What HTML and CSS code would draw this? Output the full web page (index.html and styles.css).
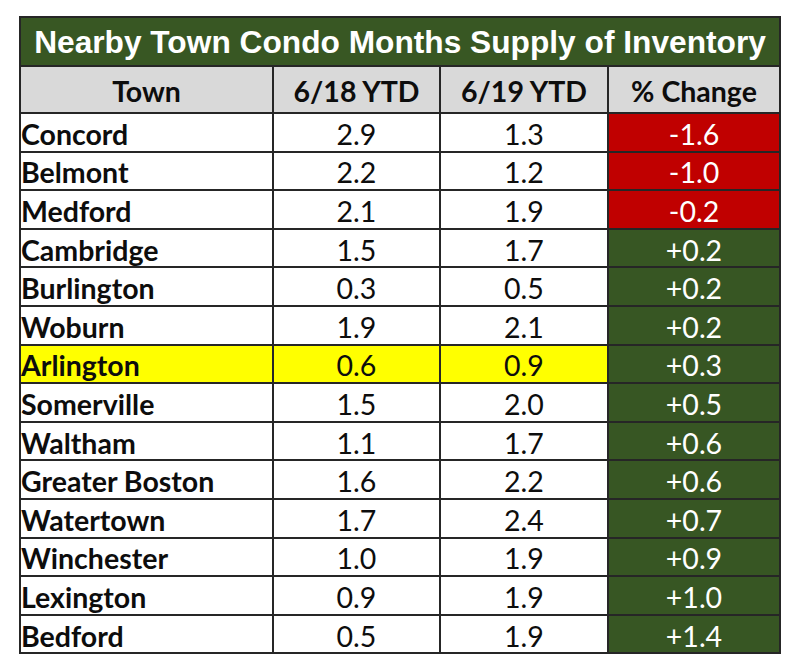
FILE: index.html
```html
<!DOCTYPE html>
<html>
<head>
<meta charset="utf-8">
<link rel="stylesheet" href="styles.css">
</head>
<body>
<table class="supply">
  <colgroup>
    <col class="c-town"><col class="c-num"><col class="c-num2"><col class="c-chg">
  </colgroup>
  <thead>
    <tr class="title-row"><th colspan="4">Nearby Town Condo Months Supply of Inventory</th></tr>
    <tr class="head-row"><th>Town</th><th>6/18 YTD</th><th>6/19 YTD</th><th>% Change</th></tr>
  </thead>
  <tbody>
    <tr><td class="town">Concord</td><td>2.9</td><td>1.3</td><td class="neg">-1.6</td></tr>
    <tr><td class="town">Belmont</td><td>2.2</td><td>1.2</td><td class="neg">-1.0</td></tr>
    <tr><td class="town">Medford</td><td>2.1</td><td>1.9</td><td class="neg">-0.2</td></tr>
    <tr><td class="town">Cambridge</td><td>1.5</td><td>1.7</td><td class="pos">+0.2</td></tr>
    <tr><td class="town">Burlington</td><td>0.3</td><td>0.5</td><td class="pos">+0.2</td></tr>
    <tr><td class="town">Woburn</td><td>1.9</td><td>2.1</td><td class="pos">+0.2</td></tr>
    <tr class="hl"><td class="town">Arlington</td><td>0.6</td><td>0.9</td><td class="pos">+0.3</td></tr>
    <tr><td class="town">Somerville</td><td>1.5</td><td>2.0</td><td class="pos">+0.5</td></tr>
    <tr><td class="town">Waltham</td><td>1.1</td><td>1.7</td><td class="pos">+0.6</td></tr>
    <tr><td class="town">Greater Boston</td><td>1.6</td><td>2.2</td><td class="pos">+0.6</td></tr>
    <tr><td class="town">Watertown</td><td>1.7</td><td>2.4</td><td class="pos">+0.7</td></tr>
    <tr><td class="town">Winchester</td><td>1.0</td><td>1.9</td><td class="pos">+0.9</td></tr>
    <tr><td class="town">Lexington</td><td>0.9</td><td>1.9</td><td class="pos">+1.0</td></tr>
    <tr><td class="town">Bedford</td><td>0.5</td><td>1.9</td><td class="pos">+1.4</td></tr>
  </tbody>
</table>
</body>
</html>
```

FILE: styles.css
```css
html, body {
  margin: 0;
  padding: 0;
  background: #ffffff;
}

body {
  padding: 16px 0 0 19px;
}

.supply {
  border-collapse: collapse;
  table-layout: fixed;
  width: 760px;
  font-family: Lato, "Open Sans", sans-serif;
  font-size: 28.5px;
  color: #0d0d0d;
  border: 2px solid #1e1e1e;
}

.c-town { width: 253px; }
.c-num { width: 167px; }
.c-num2 { width: 168px; }
.c-chg { width: 172px; }

.supply th,
.supply td {
  border: 2px solid #262626;
  padding: 0;
  text-align: center;
  vertical-align: middle;
  line-height: 24px;
}

.title-row {
  height: 49px;
}

.title-row th {
  background: #385723;
  color: #ffffff;
  font-family: "Liberation Sans", Arial, sans-serif;
  font-weight: bold;
  font-size: 31.7px;
  padding-top: 1px;
}

.head-row {
  height: 47px;
}

.head-row th {
  background: #d9d9d9;
  font-weight: bold;
  color: #0d0d0d;
  padding-top: 3px;
}

.supply tbody tr {
  height: 38.6px;
}

.supply tbody td {
  padding-top: 3px;
}

.supply td.town {
  text-align: left;
  font-weight: bold;
  padding-left: 0;
}

.hl td {
  background: #ffff00;
}

.supply td.neg {
  background: #c00000;
  color: #ffffff;
}

.supply td.pos {
  background: #375623;
  color: #ffffff;
}
```
